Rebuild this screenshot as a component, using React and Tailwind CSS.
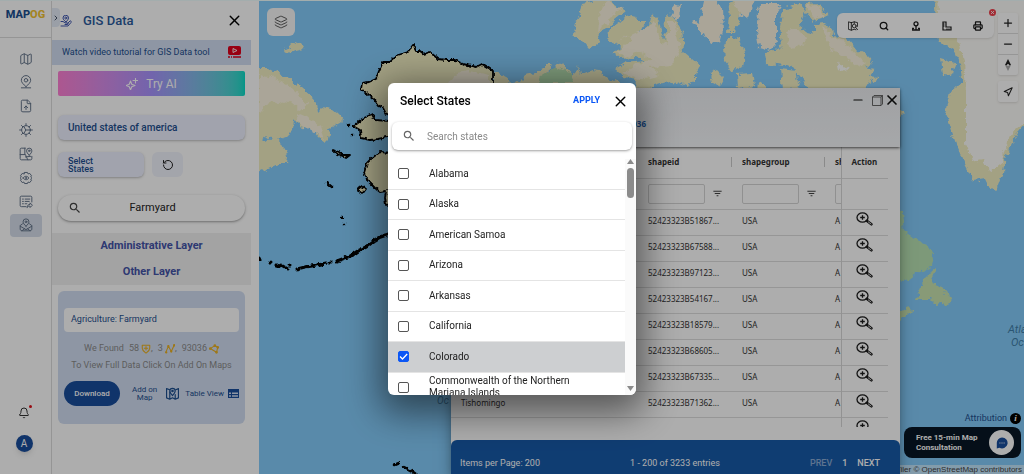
import {
  Map, FileUp, Bell, X, ChevronRight, RotateCcw, Search, Layers, Plus, Minus, Navigation, Printer,
} from 'lucide-react'
import { MdOutlineFilterList, MdSearch } from 'react-icons/md'

const railItems = [
  { label: 'Maps', icon: Map },
  { label: 'Places', icon: PinBaseIcon },
  { label: 'Upload file', icon: FileUp },
  { label: 'Process', icon: GearIcon },
  { label: 'Story map', icon: StoryIcon },
  { label: 'Settings', icon: FlowerIcon },
  { label: 'Surveys', icon: SurveyIcon },
  { label: 'GIS Data', icon: GisIcon, active: true },
]

const states = [
  'Alabama',
  'Alaska',
  'American Samoa',
  'Arizona',
  'Arkansas',
  'California',
  'Colorado',
  'Commonwealth of the Northern Mariana Islands',
]

const rows = [
  { id: '52423323B51867...' },
  { id: '52423323B67588...' },
  { id: '52423323B97123...' },
  { id: '52423323B54167...' },
  { id: '52423323B18579...' },
  { id: '52423323B68605...' },
  { id: '52423323B67335...' },
  { id: '52423323B71362...', name: 'Tishomingo' },
]

function LineIcon({ size = 14, strokeWidth = 1.5, className, children }) {
  return (
    <svg width={size} height={size} viewBox="0 0 24 24" fill="none" stroke="currentColor" strokeWidth={strokeWidth} strokeLinejoin="round" strokeLinecap="round" className={className}>
      {children}
    </svg>
  )
}

function PinBaseIcon(props) {
  return (
    <LineIcon {...props}>
      <path d="M12 20c-5-4.500-8-7.500-8-11a8 8 0 0 1 16 0c0 3.500-3 6.500-8 11z" />
      <circle cx="12" cy="9" r="3" />
      <path d="M4 22h16" />
    </LineIcon>
  )
}

function GearIcon(props) {
  return (
    <LineIcon {...props}>
      <circle cx="12" cy="12" r="7.500" />
      <path d="M12 1v3.500M12 19.500V23M1 12h3.500M19.500 12H23M4.200 4.200l2.500 2.500M17.300 17.300l2.500 2.500M4.200 19.800l2.500-2.500M17.300 6.700l2.500-2.500" />
      <path d="M8.500 6l3 6-3 6M11.500 12h8" />
    </LineIcon>
  )
}

function StoryIcon(props) {
  return (
    <LineIcon {...props}>
      <path d="M11 2H4a2 2 0 0 0-2 2v16a2 2 0 0 0 2 2h16a2 2 0 0 0 2-2v-4M2 13h9l4 9M10 2v11M11 17l9-1" />
      <path d="M17.500 14c-3-3-4.500-5-4.500-7.500a4.500 4.500 0 0 1 9 0c0 2.500-1.500 4.500-4.500 7.500z" />
      <circle cx="17.500" cy="6.500" r="1.300" />
    </LineIcon>
  )
}

function FlowerIcon(props) {
  return (
    <LineIcon {...props}>
      <path d="M9.500 2.500h5l1 2.500 3-.8 3 4-1.500 2 2 1.800-2 1.800 1.500 2-3 4-3-.8-1 2.500h-5l-1-2.500-3 .8-3-4 1.500-2L2 12l2-1.800-1.500-2 3-4 3 .8z" />
      <path d="M7 12c2.500-4 7.500-4 10 0-2.500 4-7.500 4-10 0z" />
      <circle cx="12" cy="12" r="1" />
    </LineIcon>
  )
}

function SurveyIcon(props) {
  return (
    <LineIcon {...props}>
      <path d="M12 20H4a2 2 0 0 1-2-2V4a2 2 0 0 1 2-2h16a2 2 0 0 1 2 2v8" />
      <path d="M6 7h1.500M6 11h1.500M6 15h1.500M10.500 7h8M10.500 11h7M10.500 15h3M14 21c0-3 2-5 5-5v-2.500l4 4-4 4V19c-2 0-3.500.5-5 2z" />
    </LineIcon>
  )
}

function GisIcon(props) {
  return (
    <LineIcon {...props}>
      <path d="M12 14c-3-3-5-4.800-5-7.500a5 5 0 0 1 10 0C17 9.200 15 11 12 14z" />
      <circle cx="12" cy="6.500" r="1.500" />
      <path d="M6 10l-4 3v7l3 2h14l3-2v-7l-4-3M2 14l10 6 10-6M5 22l5-4M19 22l-5-4" />
    </LineIcon>
  )
}

function HandPinIcon(props) {
  return (
    <LineIcon {...props}>
      <path d="M12 14C8 10.500 6 8.500 6 6a5 5 0 0 1 11 0c0 2.500-2 4.500-5 8z" />
      <circle cx="11.500" cy="6" r="2" />
      <path d="M2 13h4l5 3h4c2 0 2 3 0 3h-5M15 17l5-5c2-1 3 1 2 3l-6 7H2" />
    </LineIcon>
  )
}

function FoldedMapIcon(props) {
  return (
    <LineIcon {...props}>
      <path d="M7 5L1 3v17l6 2.500 5-2.500 5 2.500L23 20V3l-5 2M7 9v13M17 14v8" />
      <path d="M12 16c-3.500-3.500-5-6-5-8.500a5 5 0 0 1 10 0c0 2.500-1.500 5-5 8.500z" />
      <circle cx="12" cy="7.500" r="1.300" />
    </LineIcon>
  )
}

function ZoomRowIcon() {
  return (
    <svg width="17" height="14" viewBox="0 0 17 14" fill="none" stroke="#1c1c1c">
      <ellipse cx="6.500" cy="5.500" rx="5.500" ry="4.600" strokeWidth="1.300" />
      <path d="M6.500 3.300v4.400M4.200 5.500h4.600" strokeWidth="1.300" />
      <path d="M10.800 8.800l4.600 3.500" strokeWidth="2.600" strokeLinecap="round" />
      <path d="M12 9.700l3.300 2.500" stroke="#fff" strokeWidth="0.800" />
    </svg>
  )
}

function Rail() {
  return (
    <nav className="flex w-[52px] shrink-0 flex-col items-center border-r border-[#dcdcdc] bg-white">
      <div className="flex h-[37px] w-full items-center justify-center border-b border-[#dcdcdc] pb-2 text-[11px] font-extrabold text-[#1b4f8f]">
        MAP<span className="text-[#f2c230]">OG</span>
      </div>
      <ul className="mt-[9px] flex h-[190px] flex-col justify-between">
        {railItems.map(({ label, icon: Icon, active }) => (
          <li key={label}>
            <button
              aria-label={label}
              className={`flex h-[23px] w-8 items-center justify-center rounded-sm text-[#64748b] ${active ? 'bg-[#d6deea]' : ''}`}
            >
              <Icon size={14} strokeWidth={1.7} />
            </button>
          </li>
        ))}
      </ul>
      <div className="mt-auto flex flex-col items-center gap-4 pb-[22px] pr-[3px]">
        <button aria-label="Notifications" className="relative text-[#333]">
          <Bell size={12} strokeWidth={2} />
          <span className="absolute -right-0.5 -top-0.5 size-[3px] rounded-full bg-[#e0101a]" />
        </button>
        <button className="flex size-[17px] items-center justify-center rounded-full bg-[#194d9d] text-[10px] text-white shadow-md">A</button>
      </div>
    </nav>
  )
}

function DataPanel() {
  return (
    <aside className="relative w-[207px] shrink-0 overflow-hidden bg-white pr-2">
      <button aria-label="Expand" className="absolute left-0 top-[7px] flex h-[19px] w-2 items-center justify-center rounded-r-sm bg-[#e4ebf7] text-[#475569]">
        <ChevronRight size={8} strokeWidth={3} />
      </button>
      <header className="flex h-[39px] items-center pl-2 pr-2 text-[#2a5a9c]">
        <HandPinIcon size={12} strokeWidth={2} className="text-[#4057b0]" />
        <h1 className="ml-[11px] text-[13px] font-medium">GIS Data</h1>
        <button aria-label="Close panel" className="ml-auto text-black"><X size={17} /></button>
      </header>

      <a href="#tutorial" className="flex h-[25px] items-center justify-between bg-[#d2deF2] px-[10px] text-[9px] text-[#1d4f8f]">
        Watch video tutorial for GIS Data tool
        <svg width="13" height="13" viewBox="0 0 13 13">
          <rect width="13" height="9" rx="2" fill="#e0001b" />
          <path d="M5 2.500l4 2-4 2z" fill="none" stroke="#fff" strokeWidth="0.900" />
          <path d="M0 11h13" stroke="#e0001b" strokeWidth="1.300" strokeDasharray="2 1 1 1 8" />
        </svg>
      </a>

      <div className="px-[6px]">
        <button className="mt-[6px] flex h-[25px] w-full items-center justify-center gap-2 rounded-xs bg-linear-to-r from-[#ff80d4] via-[#a894ff] to-[#00dcc8] text-[12px] text-white">
          <LineIcon size={12} strokeWidth={2.2}>
            <path d="M9 6l2.500 6.500L18 15l-6.500 2.500L9 24l-2.500-6.500L0 15l6.500-2.500zM19 0v10M14 5h10" />
          </LineIcon>
          Try AI
        </button>
        <button className="mt-[19px] flex h-[25px] w-full items-center rounded-md bg-[#edf0ff] px-[10px] text-[10px] font-medium text-[#1d4f8f] shadow-sm shadow-black/20">
          United states of america
        </button>
        <div className="mt-3 flex gap-2">
          <button className="flex h-[25px] w-[86px] items-center rounded-md bg-[#edf0ff] px-[10px] text-left text-[9px] leading-[8px] font-medium text-[#1d4f8f] shadow-sm shadow-black/20">
            Select<br />States
          </button>
          <button aria-label="Reset" className="flex h-[25px] w-[31px] items-center justify-center rounded-md bg-[#f1f3fc] text-[#222]">
            <RotateCcw size={12} strokeWidth={2} />
          </button>
        </div>
        <label className="mt-[18px] flex h-[26px] items-center rounded-full bg-white px-[10px] text-[#444] shadow-sm shadow-black/30">
          <MdSearch size={14} />
          <input aria-label="Search layers" defaultValue="Farmyard" className="min-w-0 flex-1 pr-3 text-center text-[11px] text-[#222] outline-none" />
        </label>
      </div>

      <div className="mt-[12px] flex h-[52px] flex-col items-center justify-around bg-[#f1f1f1] text-[11px] font-bold text-[#4454a8]">
        <button>Administrative Layer</button>
        <button>Other Layer</button>
      </div>

      <section className="mx-[6px] mt-[6px] rounded-md bg-[#d2deF2] px-[6px] pb-[18px] pt-[17px] text-[9px]">
        <div className="flex h-6 items-center rounded-sm bg-white px-[7px] text-[#1d4f8f]">Agriculture: Farmyard</div>
        <div className="mt-[11px] flex h-3 items-center justify-center gap-[5px] text-[#8a8a8a]">
          <span>We Found</span>
          <span className="flex items-center">
            58
            <LineIcon size={10} strokeWidth={2.6} className="ml-0.5 text-[#eab020]">
              <path d="M12 22c-6-5-9-7-9-12V3h18v7c0 5-3 7-9 12zM12 6v8M8 10h8" />
            </LineIcon>,
          </span>
          <span className="flex items-center">
            3
            <LineIcon size={10} strokeWidth={2.6} className="ml-0.5 text-[#eab020]">
              <path d="M2 20L8 5l7 13L22 3" />
              <circle cx="3" cy="20" r="1.500" /><circle cx="8" cy="5" r="1.500" /><circle cx="15" cy="18" r="1.500" /><circle cx="22" cy="3" r="1.500" />
            </LineIcon>,
          </span>
          <span className="flex items-center">
            93036
            <LineIcon size={10} strokeWidth={2.6} className="ml-0.5 text-[#eab020]">
              <path d="M3 11l11-7 7 4-3 12z" />
              <circle cx="3" cy="11" r="2" /><circle cx="14" cy="4" r="2" /><circle cx="21" cy="8" r="2" /><circle cx="18" cy="20" r="2" />
            </LineIcon>
          </span>
        </div>
        <p className="mt-[4px] text-center leading-3 text-[#8a8a8a]">To View Full Data Click On Add On Maps</p>
        <div className="mt-[10px] flex items-center text-[8px] leading-[8px] text-[#1d4f8f]">
          <button className="h-[25px] w-14 rounded-full bg-[#194d9d] font-medium text-white">Download</button>
          <button className="ml-3 text-center">Add on<br />Map</button>
          <FoldedMapIcon size={13} strokeWidth={2.2} className="ml-auto" />
          <button className="ml-1.5 flex items-center gap-1">
            Table View
            <svg width="11" height="9" viewBox="0 0 11 9" fill="#194d9d">
              <path d="M0 0h11v9H0zM1 3.500v1.500h2V3.500zM4 3.500v1.500h6V3.500zM1 6.200v1.500h2V6.200zM4 6.200v1.500h6V6.200z" fillRule="evenodd" />
            </svg>
          </button>
        </div>
      </section>
    </aside>
  )
}

function WorldMap() {
  return (
    <svg className="absolute inset-0 size-full" viewBox="259 0 765 474" preserveAspectRatio="xMinYMin slice">
      <defs>
        <filter id="coast" x="-5%" y="-5%" width="110%" height="110%" colorInterpolationFilters="sRGB">
          <feTurbulence type="fractalNoise" baseFrequency="0.150" numOctaves="3" seed="4" />
          <feDisplacementMap in="SourceGraphic" scale="8" xChannelSelector="R" yChannelSelector="G" />
        </filter>
        <filter id="border" x="-5%" y="-5%" width="110%" height="110%" colorInterpolationFilters="sRGB">
          <feTurbulence type="fractalNoise" baseFrequency="0.250" numOctaves="2" seed="9" />
          <feDisplacementMap in="SourceGraphic" scale="4" xChannelSelector="R" yChannelSelector="G" />
        </filter>
      </defs>
      <rect x="259" width="765" height="474" fill="#84ccfb" />

      <g filter="url(#coast)" fill="#f1eec2">
        <path d="M285 51L288 45 295 41 302 44 304 47 296 49 288 52z" />
        <path d="M250 67H270L281 73 292 80 303 88 313 97 317 103 318 110 322 106 332 108 338 113 343 119 335 125 328 128 329 133 328 138 325 141 320 137 315 131 308 127 300 125 294 117 293 128 286 135 277 138 271 137 267 134 262 138 265 141 272 136 279 139 285 150 288 155 287 163 278 163 267 168 250 175z" />
        <path d="M493 71L502 73 515 83 520 80 523 75 529 71 533 74 545 65 553 65 545 72 553 70 561 60 566 67 572 74 576 71 578 64 580 74 592 69 600 70 608 77 622 84V100H493z" />
        <path d="M583 2L605 -3 625 10 615 18 607 27 598 33 600 42 588 47 581 39 573 34 575 20 581 12z" />
        <path d="M612 25L626 15 634 17 637 20 646 20 640 32 650 24 653 12 659 20 662 35 666 39 664 14 673 15 681 28 683 50 692 58 700 65 694 73 694 80 684 85 673 80 660 84 650 87 636 88 637 78 625 76 616 68 625 62 645 60 638 56 620 57 611 50 622 46 608 40 609 30z" />
        <path d="M728 2L745 -3 739 20 735 32 728 32 730 15zM730 35L740 38 745 55 743 65 733 70 725 60 724 45zM710 72L716 69 724 77 719 86 712 82zM737 73L752 72 754 85 745 90 738 87zM758 80L766 85 765 90 757 90z" />
        <path d="M783 8L800 3 806 10 800 25 806 30 815 32 815 23 825 22 835 35 843 37 850 40 858 50 868 55 873 62 865 66 875 68 870 75 878 76 865 85 868 90 812 90 800 75 790 62 782 65 766 62 765 52 773 50 782 45 780 25zM780 68L797 70 800 85 782 90z" />
        <path d="M805 3L820 2 828 15 812 20 806 12z" />
        <path d="M934 -5H1030V118L1017 132 1011 143 1006 155 1003 170 999 182 996 190 988 184 985 178 973 180 965 165 955 140 948 118 945 112 950 90 962 80 960 62 955 50 938 40z" />
        <path d="M941 58L955 62 952 74 943 73z M895 106L905 112 900 117z" />
      </g>
      <g filter="url(#coast)" fill="#fbf4e0">
        <path d="M259 73L272 76 288 84 300 94 308 104 300 108 290 99 282 105 270 100 259 112z M296 112L308 117 320 124 325 137 312 130 298 122z" />
        <path d="M605 0L622 8 612 14 606 24 597 30 600 12z M640 30L650 26 655 18 660 40 668 42 668 20 675 20 680 50 672 64 650 66 660 74 640 78 622 72 640 62 652 58 640 50 625 56 616 50 632 42 628 34 618 40z" />
        <path d="M692 18L698 22 701 14 705 -3 717 -3 722 8 723 30 720 42 712 44 706 35 698 30z M671 8L675 3 681 5 679 15 674 16zM732 -3H755L747 18 736 10zM760 3L782 3 776 12 776 35 778 42 770 50 760 47 757 30z" />
        <path d="M822 24L832 35 843 40 856 54 866 62 858 66 845 56 835 52 825 38z M786 30L800 28 806 42 792 48zM806 5L818 4 826 15 814 18z" />
      </g>
      <path filter="url(#coast)" fill="#fdfcf9" d="M938 -5H1030V116L1014 130 1007 143 1003 160 990 170 983 158 972 160 966 142 966 120 966 90 964 60 957 38 940 30z M836 60L848 68 846 72 838 68z" />
      <g filter="url(#coast)">
        <path fill="#b8e2b3" d="M890 202L902 212 904 230 915 238 926 243 934 255 932 265 915 272 905 280 890 278zM540 76L556 66 574 74 572 82 538 82z" />
        <path fill="#c9e3b0" d="M930 270L936 267 930 283 945 288 950 300 947 305 940 302 935 303 930 298 917 298 922 285zM895 313L908 305 912 309 903 318 895 321z" />
      </g>

      <g filter="url(#border)" stroke="#000" strokeWidth="1.800" strokeLinejoin="round" fill="#f1eec2">
        <path d="M493 90V70L487 66 482 63 476 66 463 63 455 59 446 59 438 58 430 51 424 53 420 50 416 50 413 44 408 51 398 54 390 61 383 61 379 70 376 78 369 81 362 82 361 88 368 93 374 98 379 105 383 107 386 113 392 116 390 120 375 119 372 113 362 118 353 125 360 129 361 137 370 139 378 138 392 135 392 152 380 151 372 157 367 162 364 172 368 180 375 187 380 191 386 190 385 197 386 204 400 200 500 180z" />
        <path d="M358 188L362 185 366 188 363 192 358 190zM333 149L339 151 342 154 350 154 346 157 337 153z" />
      </g>
      <path filter="url(#coast)" fill="#fbf4e0" d="M448 84L456 72 470 70 490 74 490 84z" />
      <path d="M386 138V150" stroke="#84ccfb" strokeWidth="8" />
      <g filter="url(#border)" stroke="#000" strokeLinecap="round" fill="none">
        <path d="M396 230L386 234 380 236 375 239 366 246 358 250 352 254" strokeWidth="3.500" />
        <path d="M353 254L337 260M326 262L317 264 305 266 297 268M281 264L288 268M276 264L280 265M330 261h1M289 264h1M270 261h1M259 257L260 259" strokeWidth="3" />
        <path d="M327 182L332 186M341 217h1M344 223h1M348 124h1M352 134h1M394 464L399 462M404 466L412 470 420 476" strokeWidth="2.500" />
      </g>
      <g fill="#3f7ea8" fontFamily="Roboto, sans-serif" fontStyle="italic" fontSize="11">
        <text x="1008" y="332">Atlantic</text>
        <text x="1011" y="345">Ocean</text>
        <text x="437" y="403" fontSize="10">Oc</text>
      </g>
    </svg>
  )
}

function MapControls() {
  return (
    <>
      <button aria-label="Layers" className="absolute left-2 top-[7px] flex size-7 items-center justify-center rounded-md bg-[#f8f8f8] text-[#444]">
        <Layers size={14} strokeWidth={1.5} />
      </button>
      <div className="absolute right-[30px] top-3 flex h-[25px] w-[157px] items-center justify-between rounded-md bg-white px-[11px] text-[#1a1a1a] shadow-sm">
        <button aria-label="Map search">
          <LineIcon size={10} strokeWidth={2}>
            <path d="M8 4L1 2v18l7 2 7-2 4 1M8 4v18M8 4l7-2 8 2v9M15 2v4" />
            <circle cx="15" cy="12" r="4.500" />
            <path d="M18.500 15.500L23 21" />
          </LineIcon>
        </button>
        <button aria-label="Search"><Search size={10} strokeWidth={3} /></button>
        <button aria-label="Street view">
          <svg width="10" height="10" viewBox="0 0 10 10" fill="none" stroke="currentColor" strokeWidth="1.300">
            <circle cx="5" cy="2.800" r="2" />
            <path d="M5 5v3.500M3 7.300H1.700v1.700h6.600V7.300H7" />
          </svg>
        </button>
        <button aria-label="Measure">
          <svg width="10" height="10" viewBox="0 0 10 10" fill="none" stroke="currentColor" strokeWidth="1.200">
            <path d="M1 1h3v5h5v3H1zM1 3h1.500M1 5h1.500M5 9V7.500M7 9V7.500" />
          </svg>
        </button>
        <button aria-label="Print"><Printer size={10} strokeWidth={3} /></button>
        <button aria-label="Hide tools" className="absolute -right-0.5 -top-1 flex size-[7px] items-center justify-center rounded-full bg-[#f0404c] text-white">
          <X size={5} strokeWidth={4} />
        </button>
      </div>
      <div className="absolute right-[6px] top-3 flex w-5 flex-col gap-[6px] text-[#222]">
        <div className="flex flex-col divide-y divide-[#ddd] rounded-xs bg-white shadow-sm">
          <button aria-label="Zoom in" className="flex h-[21px] items-center justify-center"><Plus size={12} strokeWidth={2.5} /></button>
          <button aria-label="Zoom out" className="flex h-[21px] items-center justify-center"><Minus size={12} strokeWidth={2.5} /></button>
          <button aria-label="Compass" className="flex h-[20px] items-center justify-center">
            <svg width="6" height="12" viewBox="0 0 6 12">
              <path d="M3 0l3 6H0z" fill="#222" />
              <path d="M0 6h6l-3 6z" fill="#aaa" />
              <circle cx="3" cy="6" r="1" fill="#fff" />
            </svg>
          </button>
        </div>
        <button aria-label="Locate" className="flex h-[21px] items-center justify-center rounded-xs bg-white shadow-sm">
          <Navigation size={10} strokeWidth={2.5} />
        </button>
      </div>
      <div className="absolute bottom-0 right-0 flex flex-col items-end">
        <a href="#attribution" className="mr-[3px] flex items-center gap-[3px] text-[9px] text-[#1d4f8f]">
          Attribution
          <span className="flex size-[11px] items-center justify-center rounded-full bg-black font-['Liberation_Serif',serif] text-[9px] font-bold italic text-white">i</span>
        </a>
        <button className="mr-[3px] mt-[2px] flex h-[31px] w-[117px] items-center justify-between rounded-lg bg-[#081726] pl-3 pr-[7px] text-left text-[8px] leading-[10px] font-bold text-white">
          <span>Free 15-min Map<br />Consultation</span>
          <span className="flex size-[25px] shrink-0 items-center justify-center rounded-full bg-white">
            <svg width="12" height="12" viewBox="0 0 12 12">
              <path d="M6 .5a5.500 5.500 0 1 1-2.600 10.300L.8 11.500V6A5.300 5.300 0 0 1 6 .5z" fill="#194d9d" />
              <path d="M3.400 6h1M5.500 6h1M7.600 6h1" stroke="#fff" strokeWidth="1.100" />
            </svg>
          </span>
        </button>
        <p className="mt-[7px] h-[9px] whitespace-nowrap bg-white/50 px-0.5 font-['Liberation_Sans',sans-serif] text-[8px] leading-[9px] text-[#444]">
          © MapTiler © OpenStreetMap contributors
        </p>
      </div>
    </>
  )
}

function ColumnFilter() {
  return (
    <div className="flex items-center gap-[7px]">
      <input aria-label="Filter column" className="h-5 w-[57px] rounded-xs border border-[#d5d5d5]" />
      <MdOutlineFilterList size={11} className="text-[#444]" />
    </div>
  )
}

function TableWindow() {
  return (
    <section className="absolute bottom-0 left-[192px] right-[124px] top-[87px] flex flex-col bg-white font-['Noto_Sans',sans-serif] text-[8px] text-[#333] shadow-lg shadow-black/50">
      <header className="relative h-[59px] shrink-0 bg-linear-to-b from-[#eceef1] to-[#f5f7fa] shadow-sm shadow-black/50">
        <div className="flex h-6 items-center justify-end gap-[7px] text-[#111]">
          <button aria-label="Minimize"><Minus size={14} /></button>
          <button aria-label="Maximize">
            <svg width="11" height="11" viewBox="0 0 11 11" fill="none" stroke="#444" strokeWidth="0.800">
              <path d="M.5 2h8.500v8.500H.5zM.5 2l1.500-1.500h8.500V9L9 10.500M9 2l1.500-1.500" />
            </svg>
          </button>
          <button aria-label="Close table" className="-ml-1.5"><X size={16} strokeWidth={2.5} /></button>
        </div>
        <p className="mt-1 w-[195px] text-right leading-4 font-bold text-[#1d5fae]">93036</p>
      </header>
      <div className="mb-[13px] min-h-0 flex-1 overflow-hidden pr-3">
        <table className="w-full table-fixed border-collapse text-left">
          <colgroup>
            <col />
            <col className="w-[94px]" />
            <col className="w-[93px]" />
            <col className="w-[17px]" />
            <col className="w-[47px]" />
          </colgroup>
          <thead>
            <tr className="h-[31px] border-b border-[#dedede] font-bold text-[#333]">
              <th></th>
              <th className="pl-[11px]">shapeid</th>
              <th>
                <div className="flex h-[10px] items-center border-l border-[#ccc] pl-[10px]">shapegroup</div>
              </th>
              <th className="border-r border-[#d8d8d8]">
                <div className="flex h-[10px] items-center overflow-hidden border-l border-[#ccc] pl-[10px]">sh</div>
              </th>
              <th className="pl-[10px]">Action</th>
            </tr>
            <tr className="h-[31px] border-b border-[#dedede]">
              <td></td>
              <td className="pl-[11px]"><ColumnFilter /></td>
              <td className="pl-[11px]"><ColumnFilter /></td>
              <td className="overflow-hidden border-r border-[#d8d8d8] pl-[11px]"><ColumnFilter /></td>
              <td></td>
            </tr>
          </thead>
          <tbody>
            {rows.map((row) => (
              <tr key={row.id} className="h-[26px] border-b border-[#dedede]">
                <td className="pb-0.5 pl-[10px]">{row.name}</td>
                <td className="whitespace-nowrap pb-0.5 pl-[11px]">{row.id}</td>
                <td className="pb-0.5 pl-[11px]">USA</td>
                <td className="border-r border-[#d8d8d8] pb-0.5 pl-[11px]">A</td>
                <td className="pb-[6px] pl-[14px]"><button aria-label={`Zoom to ${row.id}`} className="block"><ZoomRowIcon /></button></td>
              </tr>
            ))}
            <tr className="h-[26px]">
              <td colSpan={3}></td>
              <td className="border-r border-[#d8d8d8]"></td>
              <td className="pb-[6px] pl-[14px]"><ZoomRowIcon /></td>
            </tr>
          </tbody>
        </table>
      </div>
      <footer className="flex h-[34px] shrink-0 items-center justify-between rounded-t-md bg-[#175aa9] pl-[9px] pr-5 pt-[13px] font-[Roboto,sans-serif] text-[9px] text-white">
        <span>Items per Page: 200</span>
        <span>1 - 200 of 3233 entries</span>
        <span className="flex gap-[10px] font-medium">
          <button className="text-white/50">PREV</button>
          <span>1</span>
          <button>NEXT</button>
        </span>
      </footer>
    </section>
  )
}

function SelectStatesDialog() {
  return (
    <div className="fixed inset-0 z-10 flex items-center justify-center bg-black/32 pt-1">
      <div role="dialog" aria-label="Select States" className="flex h-[312px] w-[248px] flex-col overflow-hidden rounded-md bg-white shadow-[0_10px_36px_8px_rgba(0,0,0,0.5)]">
        <header className="flex h-9 shrink-0 items-center pl-3 pr-[7px]">
          <h2 className="text-[12px] font-medium text-black">Select States</h2>
          <button className="ml-auto text-[9px] font-bold text-[#0b57f5]">APPLY</button>
          <button aria-label="Close" className="ml-3 text-black"><X size={17} /></button>
        </header>
        <label className="mx-1 mt-[3px] flex h-7 shrink-0 items-center gap-[11px] rounded-md bg-white px-[10px] text-[#666] shadow-sm shadow-black/30">
          <MdSearch size={14} />
          <input placeholder="Search states" aria-label="Search states" className="min-w-0 flex-1 text-[10px] outline-none placeholder:text-[#8a8a8a]" />
        </label>
        <div className="mt-[9px] flex min-h-0 flex-1">
          <ul className="grid h-[244px] flex-1 auto-rows-fr text-[10px] text-[#222]">
            {states.map((state) => (
              <li key={state} className="border-b border-[#e4e4e4] has-checked:bg-[#cdcfd1]">
                <label className="flex h-full items-center gap-5 pl-[10px]">
                  <span className="relative size-[11px] shrink-0">
                    <input
                      type="checkbox"
                      defaultChecked={state === 'Colorado'}
                      className="peer block size-[11px] appearance-none rounded-xs border border-[#555] bg-white checked:border-[#0b57f5] checked:bg-[#0b57f5]"
                    />
                    <svg viewBox="0 0 11 11" className="pointer-events-none absolute inset-0 hidden peer-checked:block" fill="none" stroke="#fff" strokeWidth="1.300">
                      <path d="M2 5.500l2.500 2.500L9.200 3" />
                    </svg>
                  </span>
                  <span className="max-w-[150px] leading-3">{state}</span>
                </label>
              </li>
            ))}
          </ul>
          <div className="flex w-[11px] flex-col items-center bg-[#fafafa] text-[#8b8b8b]">
            <svg width="7" height="5" viewBox="0 0 7 5" fill="currentColor"><path d="M3.500 0L7 5H0z" /></svg>
            <span className="mt-1 h-[30px] w-[7px] rounded-full bg-[#8b8b8b]" />
            <svg width="7" height="5" viewBox="0 0 7 5" fill="currentColor" className="mb-1 mt-auto"><path d="M0 0h7L3.500 5z" /></svg>
          </div>
        </div>
      </div>
    </div>
  )
}

export default function App() {
  return (
    <div className="flex h-screen overflow-hidden border-t border-[#f0ffff] font-[Roboto,sans-serif]">
      <Rail />
      <DataPanel />
      <main className="relative min-w-0 flex-1 overflow-hidden">
        <WorldMap />
        <MapControls />
        <TableWindow />
      </main>
      <SelectStatesDialog />
    </div>
  )
}
